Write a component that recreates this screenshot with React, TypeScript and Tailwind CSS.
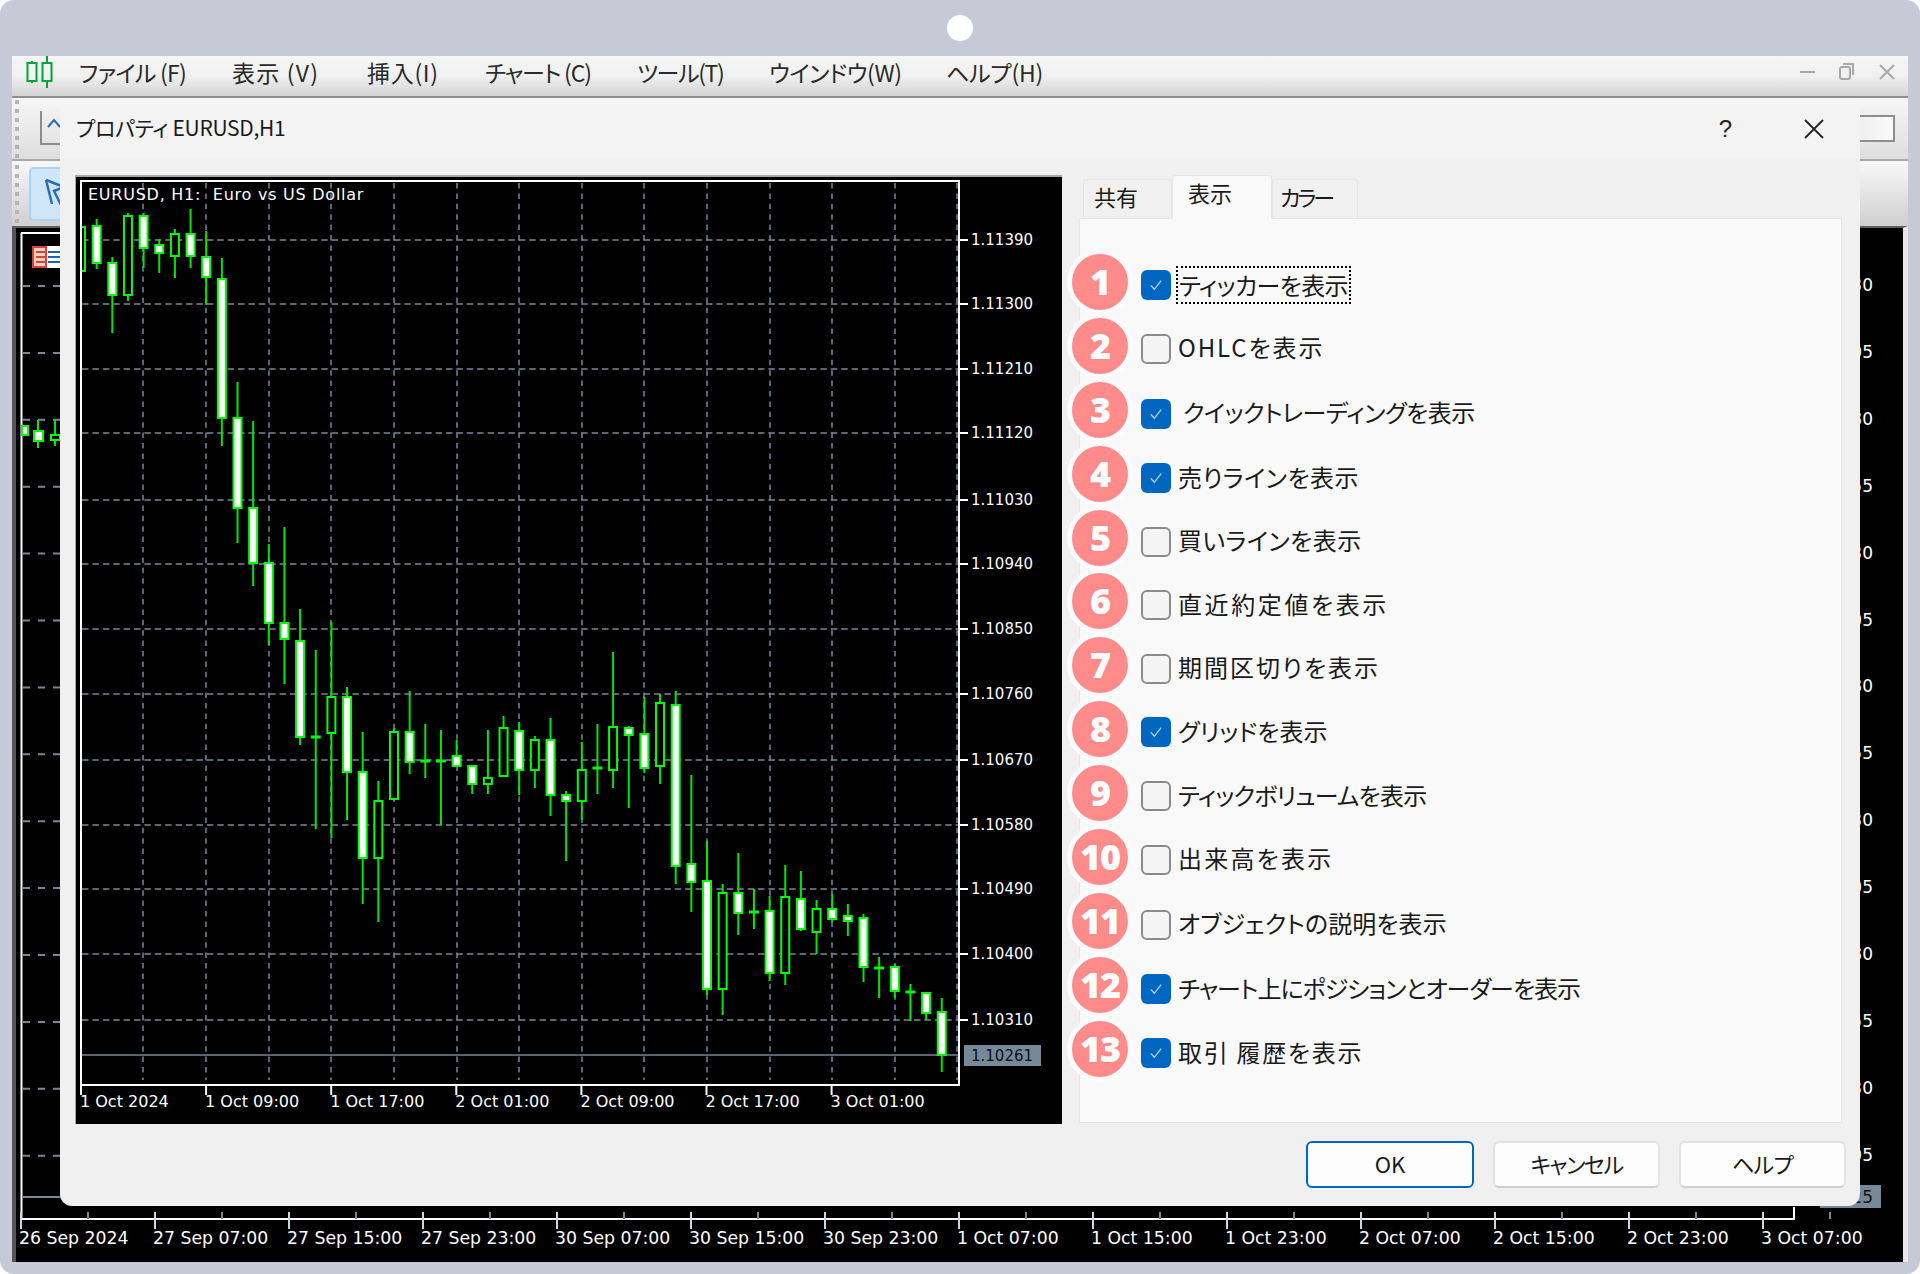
import { Fragment } from "react";

const MENUS = [
  { label: "ファイル (F)", w: "w-[153px]", t: "tracking-[-0.75px]" },
  { label: "表示 (V)", w: "w-[135px]", t: "tracking-[1.2px]" },
  { label: "挿入(I)", w: "w-[118px]", t: "tracking-[0.7px]" },
  { label: "チャート (C)", w: "w-[152px]", t: "tracking-[-1.2px]" },
  { label: "ツール(T)", w: "w-[132px]", t: "tracking-[-1.4px]" },
  { label: "ウインドウ(W)", w: "w-[177px]", t: "tracking-[-0.45px]" },
  { label: "ヘルプ(H)", w: "w-[100px]", t: "tracking-[-0.2px]" },
];

// h = row height up to the next row, the source dialog is not quite even
const ROWS = [
  { n: 1, label: "ティッカーを表示", on: true, h: "h-[64px]", t: "tracking-[-0.6px]" },
  { n: 2, label: "OHLCを表示", on: false, h: "h-[63.5px]", t: "tracking-[1.9px]" },
  { n: 3, label: " クイックトレーディングを表示", on: true, h: "h-[66px]", t: "tracking-[-0.5px]" },
  { n: 4, label: "売りラインを表示", on: true, h: "h-[63.5px]", t: "tracking-[0.45px]" },
  { n: 5, label: "買いラインを表示", on: false, h: "h-[63.5px]", t: "tracking-[0.45px]" },
  { n: 6, label: "直近約定値を表示", on: false, h: "h-[63.5px]", t: "tracking-[2.6px]" },
  { n: 7, label: "期間区切りを表示", on: false, h: "h-[63.5px]", t: "tracking-[2px]" },
  { n: 8, label: "グリッドを表示", on: true, h: "h-[63.5px]", t: "tracking-[0px]" },
  { n: 9, label: "ティックボリュームを表示", on: false, h: "h-[64px]", t: "tracking-[-0.8px]" },
  { n: 10, label: "出来高を表示", on: false, h: "h-[63.5px]", t: "tracking-[2.2px]" },
  { n: 11, label: "オブジェクトの説明を表示", on: false, h: "h-[66px]", t: "tracking-[0.1px]" },
  { n: 12, label: "チャート上にポジションとオーダーを表示", on: true, h: "h-[63.5px]", t: "tracking-[-1px]" },
  { n: 13, label: "取引 履歴を表示", on: true, h: "h-[64px]", t: "tracking-[1.7px]" },
];

// [high, low, bodyTop, bodyBottom, white body]
const CANDLES: [number, number, number, number, boolean][] = [
  [227, 271, 227, 271, false],
  [219, 269, 226, 263, true],
  [257, 333, 263, 295, true],
  [213, 301, 216, 295, false],
  [213, 268, 216, 248, true],
  [239, 273, 245, 253, true],
  [229, 278, 234, 256, false],
  [209, 268, 234, 256, true],
  [231, 305, 257, 277, true],
  [258, 446, 279, 418, true],
  [382, 543, 418, 508, true],
  [421, 586, 508, 563, true],
  [544, 645, 563, 623, true],
  [527, 684, 623, 639, true],
  [609, 745, 641, 737, true],
  [650, 829, 737, 737, true],
  [622, 838, 697, 733, false],
  [687, 820, 697, 772, true],
  [732, 904, 772, 858, true],
  [781, 922, 801, 858, false],
  [728, 799, 732, 799, false],
  [691, 774, 732, 762, true],
  [724, 778, 761, 761, true],
  [730, 825, 761, 761, true],
  [740, 766, 756, 766, true],
  [765, 794, 766, 784, true],
  [730, 794, 778, 784, false],
  [716, 776, 728, 776, false],
  [722, 795, 731, 770, true],
  [736, 788, 740, 770, false],
  [718, 816, 740, 795, true],
  [791, 861, 795, 801, true],
  [742, 820, 770, 801, false],
  [724, 794, 768, 768, true],
  [652, 788, 727, 770, false],
  [726, 808, 728, 735, true],
  [697, 773, 734, 768, true],
  [694, 784, 703, 766, false],
  [691, 884, 705, 866, true],
  [775, 912, 864, 882, true],
  [841, 995, 881, 989, true],
  [884, 1015, 893, 989, false],
  [853, 935, 893, 913, true],
  [889, 929, 912, 912, true],
  [896, 981, 911, 973, true],
  [865, 985, 897, 973, false],
  [871, 931, 899, 929, true],
  [900, 954, 909, 932, false],
  [894, 922, 909, 919, true],
  [904, 936, 916, 921, true],
  [914, 982, 918, 967, true],
  [957, 998, 968, 968, true],
  [964, 998, 967, 991, true],
  [984, 1021, 992, 992, true],
  [993, 1020, 993, 1013, true],
  [998, 1072, 1012, 1055, true],
];

const PRICES: [string, number][] = [
  ["1.11390", 240],
  ["1.11300", 304],
  ["1.11210", 369],
  ["1.11120", 433],
  ["1.11030", 500],
  ["1.10940", 564],
  ["1.10850", 629],
  ["1.10760", 694],
  ["1.10670", 760],
  ["1.10580", 825],
  ["1.10490", 889],
  ["1.10400", 954],
  ["1.10310", 1020],
];

const TIMES = ["1 Oct 2024", "1 Oct 09:00", "1 Oct 17:00", "2 Oct 01:00", "2 Oct 09:00", "2 Oct 17:00", "3 Oct 01:00"];
const V_GRID = [143, 206, 269, 331, 394, 457, 519, 582, 644, 707, 770, 832, 895, 957];

const BACK_TIMES = [
  "26 Sep 2024",
  "27 Sep 07:00",
  "27 Sep 15:00",
  "27 Sep 23:00",
  "30 Sep 07:00",
  "30 Sep 15:00",
  "30 Sep 23:00",
  "1 Oct 07:00",
  "1 Oct 15:00",
  "1 Oct 23:00",
  "2 Oct 07:00",
  "2 Oct 15:00",
  "2 Oct 23:00",
  "3 Oct 07:00",
];
const BACK_PRICES = [
  "1.11630",
  "1.11505",
  "1.11380",
  "1.11255",
  "1.11130",
  "1.11005",
  "1.10880",
  "1.10755",
  "1.10630",
  "1.10505",
  "1.10380",
  "1.10255",
  "1.10130",
  "1.10005",
];

const CHART_FONT = "'DejaVu Sans', sans-serif";

function Gripper() {
  return (
    <div className="flex w-[14px] shrink-0 flex-col gap-[5px] pl-[3px]">
      {[0, 1, 2, 3, 4, 5, 6].map((i) => (
        <div key={i} className="h-[4px] w-[4px] bg-[#b4b4b4]" />
      ))}
    </div>
  );
}

function LogoIcon() {
  return (
    <svg width="28" height="32" viewBox="0 0 28 32" fill="none" stroke="#00a33a" strokeWidth="2">
      <path d="M6 5v22M21 0v32" />
      <rect x="1.500" y="7" width="9" height="18" fill="#f3f3f3" />
      <rect x="16.500" y="7" width="9" height="18" fill="#f3f3f3" />
    </svg>
  );
}

function WindowControls() {
  return (
    <svg width="100" height="24" viewBox="0 0 100 24" fill="none" stroke="#a8a8a8" strokeWidth="2">
      <path d="M0 12h15" />
      <rect x="40" y="7" width="10" height="12" rx="2" />
      <path d="M43 4h10v11" />
      <path d="M80 5l14 14M94 5L80 19" />
    </svg>
  );
}

function BackChart() {
  const w = 1887;
  const h = 1034;
  return (
    <svg className="block" width={w} height={h} viewBox={`16 228 ${w} ${h}`} fontFamily={CHART_FONT}>
      <path d="M21.500 233V1219H1794V1207" fill="none" stroke="#fff" strokeWidth="2" />
      <path d="M21 233H70" stroke="#fff" strokeWidth="2" />
      {BACK_PRICES.map((p, i) => (
        <Fragment key={p}>
          <path d={`M23 ${286 + i * 66.9}H62`} stroke="#778899" strokeWidth="2" strokeDasharray="7 8" />
          <text x="1873" y={291 + i * 66.9} textAnchor="end" fontSize="17" fill="#fff">
            {p}
          </text>
        </Fragment>
      ))}
      <path d="M23 1197H62" stroke="#778899" strokeWidth="2" />
      {/* flag icon of the chart */}
      <rect x="32" y="246" width="32" height="22" fill="#fff" />
      <rect x="33" y="247" width="13" height="20" fill="#ecd2c0" stroke="#d9413a" strokeWidth="2" />
      <path d="M36 252h10M36 257h10M36 262h10" stroke="#d9413a" strokeWidth="2" />
      <path d="M48 252h12M48 257h12M48 262h12" stroke="#1d63ad" strokeWidth="2" />
      {/* candles on the left edge */}
      <path d="M38 420v28M55 420v26" stroke="#00e600" strokeWidth="2" />
      <rect x="22" y="426" width="6" height="9" fill="#fff" stroke="#00ff00" strokeWidth="2" />
      <rect x="34" y="431" width="9" height="10" fill="#fff" stroke="#00ff00" strokeWidth="2" />
      <rect x="51" y="435" width="9" height="5" fill="#000" stroke="#00ff00" strokeWidth="2" />
      {BACK_TIMES.map((t, i) => {
        const x = 21 + i * 134;
        return (
          <Fragment key={t}>
            <path d={`M${x} 1212V1229`} stroke="#cfd6dc" strokeWidth="2" />
            <path d={`M${x + 67} 1212V1219`} stroke="#778899" strokeWidth="2" />
            <text x={i === 0 ? 19 : x - 2} y="1244" fontSize="17.300" fill="#fff">
              {t}
            </text>
          </Fragment>
        );
      })}
      <rect x="1820" y="1185" width="61" height="23" fill="#778899" />
      <text x="1873" y="1203" textAnchor="end" fontSize="17" fill="#111">
        1.10225
      </text>
    </svg>
  );
}

function PreviewChart() {
  return (
    <svg className="block" width="987" height="949" viewBox="75 175 987 949" fontFamily={CHART_FONT}>
      <defs>
        <clipPath id="plot">
          <rect x="81" y="181" width="878" height="904" />
        </clipPath>
      </defs>
      <rect x="75" y="175" width="987" height="949" fill="#000" />
      <path d="M75 176H1062" stroke="#a6a6a6" strokeWidth="2" />
      <path d="M75 176V1124" stroke="#a6a6a6" strokeWidth="2" />
      {V_GRID.map((x) => (
        <path key={x} d={`M${x} 183V1080`} stroke="#778899" strokeWidth="1.500" strokeDasharray="5.500 4.900" />
      ))}
      {PRICES.map(([p, y]) => (
        <Fragment key={p}>
          <path d={`M82 ${y}H958`} stroke="#778899" strokeWidth="1.500" strokeDasharray="6.500 3.900" />
          <path d={`M959 ${y}H968`} stroke="#fff" strokeWidth="2" />
          <text x="971" y={y + 5} fontSize="15" fill="#fff">
            {p}
          </text>
        </Fragment>
      ))}
      <path d="M82 1055H958" stroke="#778899" strokeWidth="1.500" />
      <g clipPath="url(#plot)">
        {CANDLES.map(([high, low, top, bottom, white], i) => {
          const x = 81 + i * 15.65;
          return (
            <Fragment key={i}>
              <path d={`M${x} ${high}V${low}`} stroke="#00e600" strokeWidth="2" />
              {top === bottom ? (
                <path d={`M${x - 5} ${top}H${x + 5}`} stroke="#00ff00" strokeWidth="3" />
              ) : (
                <rect
                  x={x - 4}
                  y={top}
                  width="8"
                  height={bottom - top}
                  fill={white ? "#fff" : "#000"}
                  stroke="#00ff00"
                  strokeWidth="2"
                />
              )}
            </Fragment>
          );
        })}
      </g>
      <rect x="81" y="181" width="878" height="904" fill="none" stroke="#fff" strokeWidth="2" />
      {TIMES.map((t, i) => {
        const x = 81 + i * 125.1;
        return (
          <Fragment key={t}>
            <path d={`M${x} 1085V1095`} stroke="#fff" strokeWidth="2" />
            <text x={x - 1} y="1107" fontSize="16" fill="#fff">
              {t}
            </text>
          </Fragment>
        );
      })}
      <text x="88" y="200" fontSize="16" letterSpacing="0.750" fill="#fff" xmlSpace="preserve">
        EURUSD, H1:  Euro vs US Dollar
      </text>
      <rect x="964" y="1045" width="77" height="21" fill="#778899" />
      <text x="971" y="1061" fontSize="15" fill="#0c1116">
        1.10261
      </text>
    </svg>
  );
}

function Checkbox({ on }: { on: boolean }) {
  if (on) {
    return (
      <div className="flex h-[30px] w-[30px] shrink-0 items-center justify-center rounded-[6px] bg-[#0067c0]">
        <svg width="14" height="12" viewBox="0 0 16 14" fill="none" stroke="#b9d6f0" strokeWidth="1.500">
          <path d="M2 7.500l4 4.500 8-10" />
        </svg>
      </div>
    );
  }
  return <div className="h-[30px] w-[30px] shrink-0 rounded-[6px] border-2 border-[#8b8b8b] bg-[#f4f4f4]" />;
}

function DialogButton({ label, primary, t }: { label: string; primary?: boolean; t?: string }) {
  return (
    <button
      className={
        primary
          ? "flex h-[47px] w-[168px] items-center justify-center rounded-[6px] border-2 border-[#0067c0] bg-[#fdfdfd] pb-[2px] text-[22px] text-[#1a1a1a]"
          : `flex h-[47px] w-[167px] items-center justify-center rounded-[6px] border-2 border-[#e2e2e2] border-b-[#cfcfcf] bg-[#fdfdfd] pb-[2px] text-[22px] text-[#1a1a1a] ${t}`
      }
    >
      {label}
    </button>
  );
}

function Dialog() {
  return (
    <div className="absolute left-[48px] top-[44px] flex h-[1106px] w-[1800px] flex-col rounded-[12px] bg-[#f0f0f0]">
      <div className="flex h-[58px] items-center justify-between rounded-t-[12px] bg-[#f3f3f3] pl-[16px] pr-[36px]">
        <div className="-mt-[2px] text-[21px] tracking-[-0.3px] text-[#1a1a1a]">プロパティ EURUSD,H1</div>
        <div className="flex items-center gap-[72px]">
          <span className="font-['Liberation_Sans'] text-[24px] text-[#222]">?</span>
          <svg width="20" height="20" viewBox="0 0 20 20" fill="none" stroke="#222" strokeWidth="1.800">
            <path d="M1 1l18 18M19 1L1 19" />
          </svg>
        </div>
      </div>
      <div className="flex gap-[17px] pl-[15px] pt-[17px]">
        <PreviewChart />
        <div className="flex w-[763px] flex-col">
          <div className="flex items-end pl-[4px] text-[22px] text-[#1a1a1a]">
            <div className="flex h-[39px] w-[89px] items-center rounded-t-[3px] border border-b-0 border-[#e6e6e6] pb-[5px] pl-[10px]">共有</div>
            <div className="relative z-10 -mb-px flex h-[44px] w-[100px] items-start rounded-t-[3px] border border-b-0 border-[#e6e6e6] bg-[#f9f9f9] pl-[15px]">表示</div>
            <div className="flex h-[39px] w-[86px] items-center rounded-t-[3px] border border-b-0 border-[#e6e6e6] pb-[5px] pl-[7px] tracking-[-3px]">カラー</div>
          </div>
          <div className="flex h-[905px] border border-[#e6e6e6] bg-[#f9f9f9] pt-[31px]">
            <div className="-ml-[13px] flex w-[66px] shrink-0 flex-col">
              {ROWS.map((r) => (
                <div key={r.n} className="flex h-[63.900px] items-center justify-center">
                  <div className="relative flex h-[66px] w-[66px] shrink-0 items-center justify-center rounded-full border-[5px] border-[#fbfbfb] bg-[#ff8b8b] font-['Open_Sans'] text-[36px] font-extrabold leading-none tracking-[-1px] text-white">
                    {r.n}
                  </div>
                </div>
              ))}
            </div>
            <div className="ml-[8px] flex flex-col pt-[3px] text-[24px] text-[#1a1a1a]">
              {ROWS.map((r) => (
                <div key={r.n} className={`flex items-center ${r.h}`}>
                  <Checkbox on={r.on} />
                  {r.n === 1 ? (
                    <span className={`ml-[5px] flex h-[38px] items-center border-2 border-dotted border-black px-[1px] whitespace-pre ${r.t}`}>
                      {r.label}
                    </span>
                  ) : (
                    <span className={`-mt-[3px] ml-[7px] whitespace-pre ${r.t}`}>{r.label}</span>
                  )}
                </div>
              ))}
            </div>
          </div>
        </div>
      </div>
      <div className="flex justify-end gap-[19px] pr-[14px] pt-[17px]">
        <DialogButton label="OK" primary />
        <DialogButton label="キャンセル" t="tracking-[-1.5px]" />
        <DialogButton label="ヘルプ" t="tracking-[-0.7px]" />
      </div>
    </div>
  );
}

export default function App() {
  return (
    <div className="h-[1274px] w-[1920px] bg-white font-['Noto_Sans_CJK_JP','Liberation_Sans',sans-serif] [font-feature-settings:'palt']">
      <div className="flex h-full w-full flex-col overflow-hidden rounded-[14px] bg-[#c8c9d6] px-[12px]">
        <div className="flex h-[56px] shrink-0 items-center justify-center">
          <div className="h-[26px] w-[26px] rounded-full bg-white" />
        </div>
        <div className="relative flex h-[1206px] flex-col">
          <div className="flex h-[42px] shrink-0 items-center border-b-2 border-[#8f8f8f] bg-gradient-to-b from-[#f6f6f6] via-[#f0f0f0] to-[#d4d4d4] pb-[8px] pl-[14px] pr-[8px]">
            <LogoIcon />
            <div className="ml-[25px] flex flex-1 text-[23px] text-[#2a2a2a]">
              {MENUS.map((m) => (
                <div key={m.label} className={`${m.w} ${m.t} shrink-0 whitespace-nowrap`}>
                  {m.label}
                </div>
              ))}
            </div>
            <WindowControls />
          </div>
          <div className="flex h-[63px] shrink-0 items-center justify-between border-b-2 border-[#a8a8a8] bg-gradient-to-b from-[#f6f6f6] to-[#dedede] pr-[13px]">
            <div className="flex items-center">
              <Gripper />
              <svg width="40" height="40" viewBox="0 0 40 40" fill="none" className="ml-[14px]">
                <path d="M1 2v33h39" stroke="#8c8c8c" strokeWidth="2" />
                <path d="M8 18l6-7 6 7" stroke="#2a6db0" strokeWidth="2" />
              </svg>
            </div>
            <div className="h-[27px] w-[70px] border-2 border-[#8e8e8e] bg-gradient-to-r from-[#e4e4e4] to-[#fafafa]" />
          </div>
          <div className="flex h-[65px] shrink-0 items-center bg-gradient-to-b from-[#f8f8f8] to-[#cfcfcf]">
            <Gripper />
            <div className="ml-[3px] flex h-[54px] w-[44px] items-center justify-end rounded-[5px] border-2 border-[#a9d2f5] bg-[#cfe5f8] pr-[4px]">
              <svg width="24" height="32" viewBox="0 0 24 32" fill="none" stroke="#2a6db0" strokeWidth="2.500">
                <path d="M3 2l18 7-10 4 8 16" />
                <path d="M3 2l6 24" />
              </svg>
            </div>
          </div>
          <div className="flex-1 border-l-[4px] border-r-[5px] border-t-[2px] border-l-[#555555] border-r-[#e8e8e8] border-t-[#5f5f5f] bg-black">
            <BackChart />
          </div>
          <Dialog />
        </div>
        <div className="h-[12px] shrink-0" />
      </div>
    </div>
  );
}
